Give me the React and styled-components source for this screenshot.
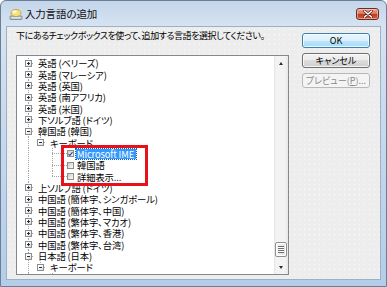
import React from 'react';
import styled, { createGlobalStyle, css } from 'styled-components';

const GlobalStyle = createGlobalStyle`
  html, body {
    margin: 0;
    padding: 0;
    background: #ffffff;
  }
  body {
    font-family: "Noto Sans CJK JP", "Noto Sans", sans-serif;
    color: #000;
  }
  * {
    box-sizing: border-box;
  }
`;

const DOT = '#a3a3a3';

const Window = styled.div`
  width: 387px;
  height: 287px;
  display: flex;
  flex-direction: column;
  border: 1px solid #6b7f94;
  border-radius: 6px 6px 0 0;
  overflow: hidden;
  background: linear-gradient(to bottom, #c4d6eb 0%, #d6e3f1 9%, #c9daed 40%, #b3cde9 100%);
`;

const TitleBar = styled.div`
  height: 25px;
  flex: none;
  display: flex;
  align-items: center;
  padding-left: 8px;
`;

const TitleIcon = styled.svg`
  width: 14px;
  height: 14px;
  flex: none;
`;

const Title = styled.span`
  margin-left: 2px;
  font-size: 10.5px;
  line-height: 12px;
  letter-spacing: -0.2px;
  color: #111;
`;

const CloseButton = styled.div`
  margin-left: auto;
  margin-right: 7px;
  align-self: flex-start;
  margin-top: 7px;
  width: 23px;
  height: 12px;
  border: 1px solid #6e2b1f;
  border-radius: 3px;
  display: flex;
  align-items: center;
  justify-content: center;
  background: linear-gradient(to bottom, #e9a593 0%, #d97a61 45%, #c23a1d 55%, #d4603a 100%);
  box-shadow: inset 0 0 0 1px rgba(255, 220, 210, 0.5);
`;

const Client = styled.div`
  flex: 1;
  margin: 0 5px 6px 5px;
  border: 1px solid #9cb0c6;
  display: flex;
  gap: 13px;
  padding: 0 10px 4px 9px;
  background-color: #ededed;
  background-image: radial-gradient(circle, #fbfbfb 0.6px, transparent 0.9px);
  background-size: 5px 5px;
`;

const Main = styled.div`
  width: 273px;
  flex: none;
  display: flex;
  flex-direction: column;
`;

const Instruction = styled.p`
  margin: 3px 0 14px;
  height: 11px;
  font-size: 9px;
  line-height: 11px;
  letter-spacing: -0.45px;
  font-feature-settings: "palt";
  white-space: nowrap;
`;

const ListBox = styled.div`
  height: 220px;
  border: 1px solid #828790;
  background: #ffffff;
  display: flex;
`;

const Tree = styled.div`
  flex: 1;
  position: relative;
  overflow: hidden;
  padding-top: 1.5px;
`;

const Row = styled.div`
  height: 11.35px;
  display: flex;
  align-items: stretch;
  padding-left: 5px;
  font-size: 9.3px;
  letter-spacing: -0.1px;
  white-space: nowrap;
  font-feature-settings: "palt";
`;

const vertical = (size) =>
  `repeating-linear-gradient(to bottom, ${DOT} 0 1px, transparent 1px 2px) 6px 0 / 1px ${size} no-repeat`;
const horizontal = `repeating-linear-gradient(to right, ${DOT} 0 1px, transparent 1px 2px) 6px 50% / 6px 1px no-repeat`;

const Guide = styled.span`
  flex: none;
  width: 12px;
  display: flex;
  align-items: center;
  justify-content: center;
  background: ${(p) =>
    [
      p.$line === 'full' && vertical('100%'),
      p.$line === 'half' && vertical('50%'),
      p.$branch && horizontal,
    ]
      .filter(Boolean)
      .join(', ') || 'none'};
`;

const Stub = styled.span`
  flex: none;
  width: 9px;
  background: repeating-linear-gradient(to right, ${DOT} 0 1px, transparent 1px 2px) 0 50% / 100% 1px no-repeat;
`;

const Expander = styled.span`
  width: 7px;
  height: 7px;
  margin-left: 1px;
  border: 1px solid #8d8d8d;
  background:
    linear-gradient(#1f2f46, #1f2f46) center / 3px 1px no-repeat,
    ${(p) => (p.$open ? '' : 'linear-gradient(#1f2f46, #1f2f46) center / 1px 3px no-repeat,')}
    linear-gradient(135deg, #ffffff 30%, #d8d8d8);
`;

const CheckBox = styled.span`
  flex: none;
  align-self: center;
  width: 7px;
  height: 7px;
  border: 1px solid #8e8f8f;
  background: linear-gradient(135deg, #c9c9c9, #f2f2f2 75%);
  display: flex;
  align-items: center;
  justify-content: center;
`;

const Label = styled.span`
  align-self: center;
  margin-left: ${(p) => (p.$check ? '1.5px' : '2.5px')};
  padding: 0 1.5px;
  line-height: 10px;
  height: 10px;
  ${(p) =>
    p.$selected &&
    css`
      background: #3399ff;
      color: #ffffff;
      outline: 1px dotted #1a5fb0;
    `}
`;

const Callout = styled.div`
  position: absolute;
  left: 44px;
  top: 89px;
  width: 87px;
  height: 41px;
  border: 3px solid #e8101a;
  pointer-events: none;
`;

const ScrollBar = styled.div`
  width: 14px;
  flex: none;
  display: flex;
  flex-direction: column;
  background: linear-gradient(to right, #e4e4e4 0, #f3f3f3 2px, #f3f3f3 11px, #e6e6e6 14px);
`;

const ArrowButton = styled.div`
  height: 14px;
  flex: none;
  display: flex;
  align-items: center;
  justify-content: center;
`;

const Arrow = styled.span`
  width: 0;
  height: 0;
  border-left: 2.5px solid transparent;
  border-right: 2.5px solid transparent;
  ${(p) =>
    p.$up
      ? css`border-bottom: 3px solid #2b2b2b;`
      : css`border-top: 3px solid #2b2b2b;`}
`;

const Track = styled.div`
  flex: 1;
  display: flex;
  flex-direction: column;
  justify-content: flex-end;
  padding: 0 1px 3px;
`;

const Thumb = styled.div`
  height: 15px;
  border: 1px solid #8f8f8f;
  border-radius: 2px;
  background: linear-gradient(to right, #f6f6f6, #e1e1e1);
  box-shadow: inset 0 0 0 1px #ffffff;
  display: flex;
  align-items: center;
  justify-content: center;
`;

const Grip = styled.span`
  width: 6px;
  height: 7px;
  background: repeating-linear-gradient(to bottom, #6d6d6d 0 1px, #fbfbfb 1px 2px);
`;

const Side = styled.div`
  flex: 1;
  display: flex;
  flex-direction: column;
  gap: 5px;
  padding-top: 6px;
`;

const Button = styled.div`
  height: 15px;
  border: 1px solid #707070;
  border-radius: 3px;
  display: flex;
  align-items: center;
  justify-content: center;
  font-size: 9px;
  font-feature-settings: "palt";
  color: #000;
  background: linear-gradient(to bottom, #f2f2f2 0%, #ebebeb 50%, #dcdcdc 50%, #cfcfcf 100%);
  box-shadow: inset 0 0 0 1px rgba(255, 255, 255, 0.75);

  ${(p) =>
    p.$primary &&
    css`
      border-color: #3c7fb1;
      background: linear-gradient(to bottom, #eaf6fd 0%, #d9f0fc 50%, #bee6fd 50%, #a7d9f5 100%);
    `}

  ${(p) =>
    p.$disabled &&
    css`
      border-color: #b5b9bc;
      background: #f4f4f4;
      color: #8a8a8a;
      box-shadow: none;
    `}
`;

const rows = [
  { level: 0, text: '英語 (ベリーズ)' },
  { level: 0, text: '英語 (マレーシア)' },
  { level: 0, text: '英語 (英国)' },
  { level: 0, text: '英語 (南アフリカ)' },
  { level: 0, text: '英語 (米国)' },
  { level: 0, text: '下ソルブ語 (ドイツ)' },
  { level: 0, open: true, text: '韓国語 (韓国)' },
  { level: 1, open: true, last: true, text: 'キーボード' },
  { level: 2, check: true, checked: true, selected: true, text: 'Microsoft IME' },
  { level: 2, check: true, text: '韓国語' },
  { level: 2, check: true, last: true, text: '詳細表示...' },
  { level: 0, text: '上ソルブ語 (ドイツ)' },
  { level: 0, text: '中国語 (簡体字、シンガポール)' },
  { level: 0, text: '中国語 (簡体字、中国)' },
  { level: 0, text: '中国語 (繁体字、マカオ)' },
  { level: 0, text: '中国語 (繁体字、香港)' },
  { level: 0, text: '中国語 (繁体字、台湾)' },
  { level: 0, open: true, text: '日本語 (日本)' },
  { level: 1, open: true, last: true, text: 'キーボード' },
  { level: 2, check: true, checked: true, text: 'Microsoft IME' },
];

const TreeRow = ({ row }) => {
  // ancestor columns: root line always continues, level-1 parents are only children
  const guides = [];
  for (let c = 0; c < row.level; c += 1) {
    guides.push(<Guide key={c} $line={c === 0 ? 'full' : 'none'} />);
  }
  const own = row.last ? 'half' : 'full';

  return (
    <Row>
      {guides}
      {row.check ? (
        <>
          <Guide $line={own} $branch />
          <Stub />
          <CheckBox>
            {row.checked && (
              <svg width="6" height="6" viewBox="0 0 6 6">
                <path d="M0.6 3.1 L2.3 4.8 L5.4 0.8" fill="none" stroke="#24446f" strokeWidth="1.3" />
              </svg>
            )}
          </CheckBox>
        </>
      ) : (
        <Guide $line={row.level === 0 ? 'full' : own} $branch>
          <Expander $open={row.open} />
        </Guide>
      )}
      <Label $check={row.check} $selected={row.selected}>
        {row.text}
      </Label>
    </Row>
  );
};

const App = () => {
  return (
    <>
      <GlobalStyle />
      <Window>
        <TitleBar>
          <TitleIcon viewBox="0 0 14 14">
            <rect x="1" y="9" width="12" height="3.5" rx="0.8" fill="#b9c7d6" stroke="#6f8297" strokeWidth="0.8" />
            <path d="M2.5 10.7 H11.5" stroke="#ffffff" strokeWidth="0.7" />
            <ellipse cx="7" cy="6" rx="5" ry="3.6" fill="#f4df7f" stroke="#bf9c33" strokeWidth="0.8" />
            <ellipse cx="5.6" cy="4.9" rx="2.2" ry="1.3" fill="#fff8d6" />
          </TitleIcon>
          <Title>入力言語の追加</Title>
          <CloseButton>
            <svg width="10" height="8" viewBox="0 0 10 8">
              <path d="M1.5 1 L8.5 7 M8.5 1 L1.5 7" stroke="#5a1d12" strokeWidth="2.8" strokeLinecap="round" />
              <path d="M1.5 1 L8.5 7 M8.5 1 L1.5 7" stroke="#ffffff" strokeWidth="1.6" strokeLinecap="round" />
            </svg>
          </CloseButton>
        </TitleBar>
        <Client>
          <Main>
            <Instruction>下にあるチェックボックスを使って、追加する言語を選択してください。</Instruction>
            <ListBox>
              <Tree>
                {rows.map((row, i) => (
                  <TreeRow key={i} row={row} />
                ))}
                <Callout />
              </Tree>
              <ScrollBar>
                <ArrowButton>
                  <Arrow $up />
                </ArrowButton>
                <Track>
                  <Thumb>
                    <Grip />
                  </Thumb>
                </Track>
                <ArrowButton>
                  <Arrow />
                </ArrowButton>
              </ScrollBar>
            </ListBox>
          </Main>
          <Side>
            <Button $primary>OK</Button>
            <Button>キャンセル</Button>
            <Button $disabled>
              プレビュー(<u>P</u>)...
            </Button>
          </Side>
        </Client>
      </Window>
    </>
  );
};

export default App;
